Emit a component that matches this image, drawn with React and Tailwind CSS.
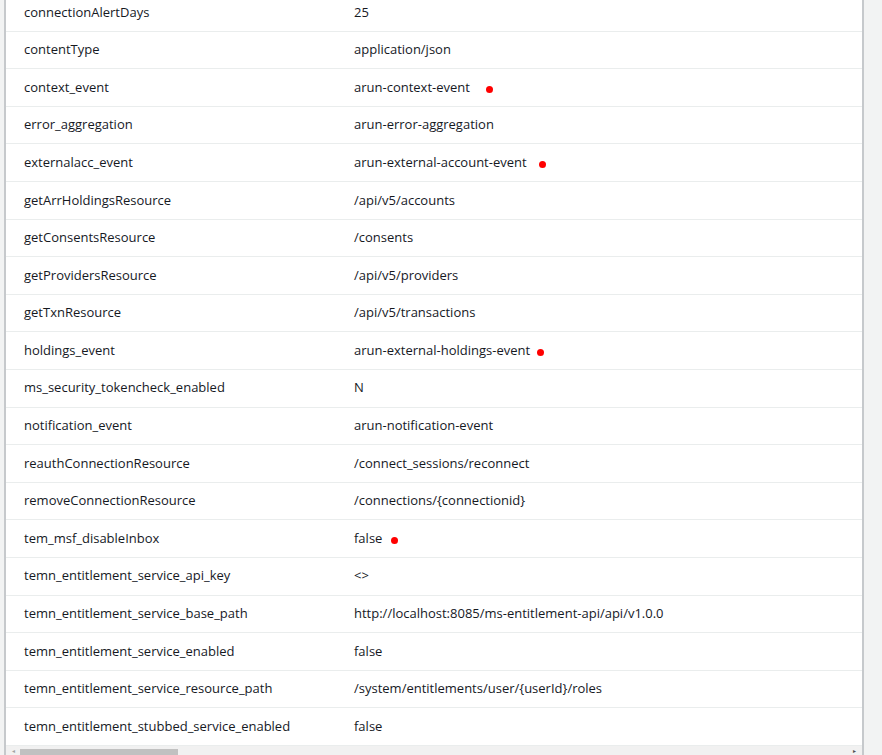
import React from "react";

// key/value rows of the environment table; dot = offset (px) of the red marker after the value
const rows = [
  { k: "connectionAlertDays", v: "25" },
  { k: "contentType", v: "application/json" },
  { k: "context_event", v: "arun-context-event", dot: 16 },
  { k: "error_aggregation", v: "arun-error-aggregation" },
  { k: "externalacc_event", v: "arun-external-account-event", dot: 12 },
  { k: "getArrHoldingsResource", v: "/api/v5/accounts" },
  { k: "getConsentsResource", v: "/consents" },
  { k: "getProvidersResource", v: "/api/v5/providers" },
  { k: "getTxnResource", v: "/api/v5/transactions" },
  { k: "holdings_event", v: "arun-external-holdings-event", dot: 7 },
  { k: "ms_security_tokencheck_enabled", v: "N" },
  { k: "notification_event", v: "arun-notification-event" },
  { k: "reauthConnectionResource", v: "/connect_sessions/reconnect" },
  { k: "removeConnectionResource", v: "/connections/{connectionid}" },
  { k: "tem_msf_disableInbox", v: "false", dot: 9 },
  { k: "temn_entitlement_service_api_key", v: "<>" },
  { k: "temn_entitlement_service_base_path", v: "http://localhost:8085/ms-entitlement-api/api/v1.0.0" },
  { k: "temn_entitlement_service_enabled", v: "false" },
  { k: "temn_entitlement_service_resource_path", v: "/system/entitlements/user/{userId}/roles" },
  { k: "temn_entitlement_stubbed_service_enabled", v: "false" },
];

export default function App() {
  return (
    <div
      className="w-[882px] h-[755px] overflow-hidden bg-[#f2f3f3] flex"
      style={{ fontFamily: '"Open Sans", "Liberation Sans", sans-serif' }}
    >
      <div className="ml-[4px] w-[860px] h-full bg-white border-l-2 border-r-2 border-[#c6c9cc] flex flex-col">
        <div className="flex-1 overflow-hidden">
          <div className="mt-[-6px]">
            {rows.map((r) => (
              <div
                key={r.k}
                className="h-[37.6px] flex items-center border-b border-[#eaeded] text-[13px] text-[#16191f]"
              >
                <div className="w-[348px] pl-[18px] whitespace-nowrap">{r.k}</div>
                <div className="flex items-center whitespace-nowrap">
                  <span>{r.v}</span>
                  {r.dot && (
                    <span
                      className="inline-block w-[7px] h-[7px] rounded-full bg-[#ff0000] mt-[4px]"
                      style={{ marginLeft: r.dot }}
                    />
                  )}
                </div>
              </div>
            ))}
          </div>
        </div>
        <div className="h-[9px] bg-[#f1f1f1] flex items-end relative">
          <span className="absolute left-[6px] top-[2px] text-[6px] leading-none text-[#a3a3a3]">◂</span>
          <div className="ml-[14px] w-[158px] h-[6px] bg-[#c1c1c1]" />
          <span className="absolute right-[6px] top-[2px] text-[6px] leading-none text-[#505050]">▸</span>
        </div>
      </div>
    </div>
  );
}
